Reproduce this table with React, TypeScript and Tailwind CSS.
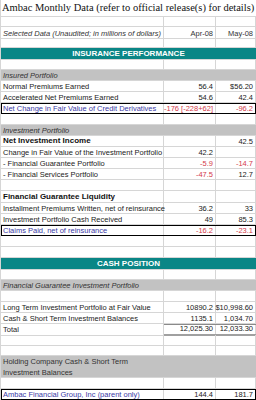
const line = 'border-[#d6d6d6]';

type RowProps = {
  label?: React.ReactNode;
  a?: React.ReactNode;
  b?: React.ReactNode;
  h?: string;
  labelClass?: string;
  valClass?: string;
  boxed?: boolean;
};

function Row({ label, a, b, h = 'h-[11px]', labelClass = '', valClass = 'text-[#222]', boxed }: RowProps) {
  return (
    <div
      className={`grid grid-cols-[163px_52px_40px] ${h} ${boxed ? 'outline outline-black -outline-offset-1' : ''}`}
    >
      <div className={`border-r border-b ${line} pl-[2px] flex items-end leading-none pb-[1px] whitespace-nowrap overflow-visible ${labelClass}`}>
        {label}
      </div>
      <div className={`border-r border-b ${line} pr-[2px] flex items-end justify-end leading-none pb-[1px] whitespace-nowrap ${valClass}`}>
        {a}
      </div>
      <div className={`border-r border-b ${line} pr-[2px] flex items-end justify-end leading-none pb-[1px] whitespace-nowrap ${valClass}`}>
        {b}
      </div>
    </div>
  );
}

function Band({ children }: { children: React.ReactNode }) {
  return (
    <div className="h-[12px] bg-[#0a8686] flex items-center justify-center text-white font-bold text-[8px] leading-none border-b border-[#d6d6d6]">
      {children}
    </div>
  );
}

function GrayRow({ children, h = 'h-[11px]' }: { children: React.ReactNode; h?: string }) {
  return (
    <div className={`${h} bg-[#c2c2c2] pl-[2px] italic text-[#333] flex flex-col justify-center leading-[11px] border-b border-[#d6d6d6]`}>
      {children}
    </div>
  );
}

const red = 'text-[#d43a4a]';
const blue = 'text-[#3a3aa6]';

export default function App() {
  return (
    <div className="w-[256px] h-[400px] overflow-hidden bg-white text-[7.5px] text-[#222]" style={{ fontFamily: 'Arial, "Liberation Sans", sans-serif' }}>
      <div className={`w-[256px] border-l ${line}`}>
        {/* titre */}
        <div
          className={`h-[17px] border-b ${line} pl-[1px] flex items-center text-[10.5px] text-[#111] whitespace-nowrap`}
          style={{ fontFamily: '"Liberation Serif", serif' }}
        >
          Ambac Monthly Data (refer to official release(s) for details)
        </div>
        <Row h="h-[10px]" />
        <Row
          h="h-[12px]"
          label={<span className="italic text-[#333]">Selected Data (Unaudited; in millions of dollars)</span>}
          a="Apr-08"
          b="May-08"
          valClass="text-[#333]"
        />
        <Row h="h-[9px]" />
        <Band>INSURANCE PERFORMANCE</Band>
        <Row h="h-[10px]" />
        <GrayRow>Insured Portfolio</GrayRow>
        <Row label="Normal Premiums Earned" a="56.4" b="$56.20" />
        <Row label="Accelerated Net Premiums Earned" a="54.6" b="42.4" />
        <Row
          boxed
          label={<span className={blue}>Net Change in Fair Value of Credit Derivatives</span>}
          a="-176 [-228+62]"
          b="-96.2"
          valClass={red}
        />
        <Row />
        <GrayRow>Investment Portfolio</GrayRow>
        <Row label={<span className="font-bold text-[8px] text-[#111]">Net Investment Income</span>} b="42.5" />
        <Row label="Change in Fair Value of the Investment Portfolio" a="42.2" />
        <Row label="- Financial Guarantee Portfolio" a={<span className={red}>-5.9</span>} b={<span className={red}>-14.7</span>} />
        <Row label="- Financial Services Portfolio" a={<span className={red}>-47.5</span>} b="12.7" />
        <Row />
        <Row h="h-[12px]" label={<span className="font-bold text-[8px] text-[#111]">Financial Guarantee Liquidity</span>} />
        <Row label="Installment Premiums Written, net of reinsurance" a="36.2" b="33" />
        <Row label="Investment Portfolio Cash Received" a="49" b="85.3" />
        <Row
          boxed
          label={<span className={blue}>Claims Paid, net of reinsurance</span>}
          a="-16.2"
          b="-23.1"
          valClass={red}
        />
        <Row h="h-[11px]" />
        <Row h="h-[11px]" />
        <Band>CASH POSITION</Band>
        <Row h="h-[10px]" />
        <GrayRow>Financial Guarantee Investment Portfolio</GrayRow>
        <Row />
        <Row label="Long Term Investment Portfolio at Fair Value" a="10890.2" b="$10,998.60" />
        <Row label="Cash & Short Term Investment Balances" a="1135.1" b="1,034.70" />
        <div className="grid grid-cols-[163px_92px] h-[11px]">
          <div className={`border-r border-b ${line} pl-[2px] flex items-end leading-none pb-[1px]`}>Total</div>
          <div className="border-t border-[#8a8a8a] border-b-2 border-b-[#a0a0a0] grid grid-cols-[52px_40px]">
            <div className={`border-r ${line} pr-[2px] flex items-end justify-end leading-none pb-[1px]`}>12,025.30</div>
            <div className={`border-r ${line} pr-[2px] flex items-end justify-end leading-none pb-[1px]`}>12,033.30</div>
          </div>
        </div>
        <Row />
        <Row h="h-[10px]" />
        <GrayRow h="h-[22px]">
          <span className="not-italic">Holding Company Cash &amp; Short Term</span>
          <span className="not-italic">Investment Balances</span>
        </GrayRow>
        <Row />
        <Row
          boxed
          label={<span className={blue}>Ambac Financial Group, Inc (parent only)</span>}
          a="144.4"
          b="181.7"
        />
      </div>
    </div>
  );
}
